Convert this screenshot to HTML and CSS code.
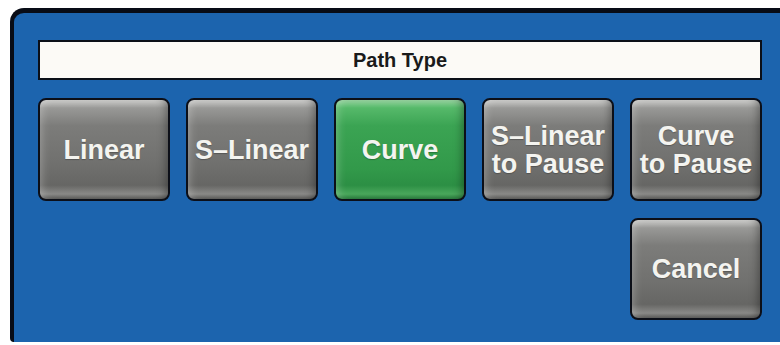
FILE: index.html
```html
<!DOCTYPE html>
<html lang="en">
<head>
  <meta charset="UTF-8" />
  <title>Path Type</title>
  <link rel="stylesheet" href="styles.css">
</head>
<body>
  <div class="dialog">
    <div class="dialog-inner">
      <div class="title-bar">Path Type</div>
      <div class="button-grid">
        <button class="key">Linear</button>
        <button class="key">S–Linear</button>
        <button class="key selected">Curve</button>
        <button class="key">S–Linear<br>to Pause</button>
        <button class="key">Curve<br>to Pause</button>
        <button class="key cancel">Cancel</button>
      </div>
    </div>
  </div>
</body>
</html>
```

FILE: styles.css
```css
:root {
  --panel-blue: #1c64ae;
  --edge: #080c16;
}

html, body {
  margin: 0;
  padding: 0;
  background: #ffffff;
  overflow: hidden;
  font-family: 'Liberation Sans', Arial, sans-serif;
}

.dialog {
  margin: 8px 0 0 10px;
  width: 800px;
  height: 334px;
  box-sizing: border-box;
  background: var(--panel-blue);
  border-left: 4px solid var(--edge);
  border-top: 5px solid var(--edge);
  border-top-left-radius: 14px;
  border-bottom-left-radius: 4px;
  padding: 27px 0 0 24px;
}

.dialog-inner {
  width: 724px;
}

.title-bar {
  height: 40px;
  box-sizing: border-box;
  border: 2px solid #0b0f18;
  background: #fcfaf6;
  display: flex;
  align-items: center;
  justify-content: center;
  font-size: 20px;
  font-weight: bold;
  color: #1a1a1a;
}

.button-grid {
  margin-top: 18px;
  display: grid;
  grid-template-columns: repeat(5, 132px);
  grid-auto-rows: 103px;
  column-gap: 16px;
  row-gap: 17px;
}

.key {
  margin: 0;
  padding: 0;
  border: 2px solid #0c0f18;
  border-radius: 8px;
  color: #f4f4f0;
  font-family: inherit;
  font-size: 27px;
  font-weight: bold;
  line-height: 28px;
  text-shadow: 0 1px 1px rgba(0,0,0,0.25);
  background: linear-gradient(to bottom, #d2d2d0 0%, #999997 8%, #7c7c7a 26%, #70706e 65%, #666664 86%, #8a8a88 95%, #5a5a58 100%);
  box-shadow: inset 6px 0 8px -4px rgba(255,255,255,0.25), inset -6px 0 8px -4px rgba(0,0,0,0.35);
}

.key.selected {
  background: linear-gradient(to bottom, #98d8a2 0%, #56b96a 8%, #3ba453 26%, #32994a 70%, #2c8f44 86%, #4aa85c 95%, #257b39 100%);
}

.key.cancel {
  grid-column: 5;
  height: 102px;
}
```
